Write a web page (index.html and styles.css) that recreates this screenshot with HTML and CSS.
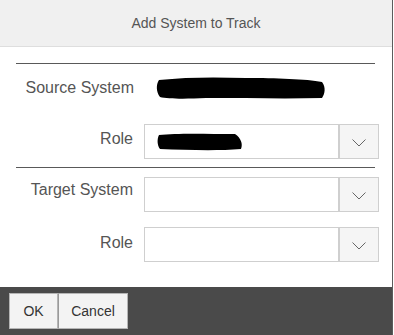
FILE: index.html
```html
<!DOCTYPE html>
<html lang="en">
<head>
  <meta charset="UTF-8">
  <title>Add System to Track</title>
  <link rel="stylesheet" href="styles.css">
</head>
<body>

  <div class="dialog">
    <div class="dialog-header">Add System to Track</div>

    <div class="dialog-body">
      <div class="separator first"></div>

      <div class="row source">
        <label class="row-label">Source System</label>
        <div class="row-value">
          <svg class="redact" width="170" height="24" viewBox="0 0 170 24">
            <path d="M3 4 C30 1 60 1 90 2 C120 2 150 3 166 6 C170 11 169 18 166 22 C130 23 90 22 50 22 C30 23 12 23 4 21 C0 16 0 8 3 4 Z" fill="#000"/>
          </svg>
        </div>
      </div>

      <div class="row role">
        <label class="row-label">Role</label>
        <div class="select">
          <div class="select-input">
            <svg class="redact small" width="86" height="18" viewBox="0 0 86 18">
              <path d="M2 2 C20 0 50 1 78 1 C84 5 86 11 84 16 C60 18 30 17 3 16 C0 12 0 6 2 2 Z" fill="#000"/>
            </svg>
          </div>
          <div class="select-btn">
            <svg width="14" height="8" viewBox="0 0 14 8"><polyline points="0.5,0.5 7,7 13.5,0.5" fill="none" stroke="#666" stroke-width="1"/></svg>
          </div>
        </div>
      </div>

      <div class="separator second"></div>

      <div class="row target">
        <label class="row-label">Target System</label>
        <div class="select">
          <div class="select-input"></div>
          <div class="select-btn">
            <svg width="14" height="8" viewBox="0 0 14 8"><polyline points="0.5,0.5 7,7 13.5,0.5" fill="none" stroke="#666" stroke-width="1"/></svg>
          </div>
        </div>
      </div>

      <div class="row role2">
        <label class="row-label">Role</label>
        <div class="select">
          <div class="select-input"></div>
          <div class="select-btn">
            <svg width="14" height="8" viewBox="0 0 14 8"><polyline points="0.5,0.5 7,7 13.5,0.5" fill="none" stroke="#666" stroke-width="1"/></svg>
          </div>
        </div>
      </div>
    </div>

    <div class="dialog-footer">
      <button class="btn ok">OK</button>
      <button class="btn cancel">Cancel</button>
    </div>
  </div>

</body>
</html>
```

FILE: styles.css
```css
body {
  margin: 0;
  font-family: 'Liberation Sans', Arial, sans-serif;
  background: #fff;
  overflow: hidden;
}

.dialog {
  width: 392px;
  height: 335px;
  border-right: 1px solid #5c5c5c;
  display: flex;
  flex-direction: column;
}

.dialog-header {
  height: 46px;
  line-height: 46px;
  background: #f0f0f0;
  border-bottom: 1px solid #dedede;
  text-align: center;
  font-size: 14px;
  color: #555;
}

.dialog-body {
  padding: 0 13px 0 16px;
  flex: 1;
}

.separator {
  height: 1px;
  background: #595959;
  margin-right: 4px;
}

.separator.first {
  margin-top: 16px;
}

.separator.second {
  margin-top: 8px;
}

.row {
  display: flex;
  align-items: flex-start;
  gap: 11px;
}

.row-label {
  width: 118px;
  text-align: right;
  font-size: 16px;
  line-height: 18px;
  color: #555;
  padding-top: 6px;
}

.row.source {
  height: 47px;
  align-items: center;
}

.row.source .row-label {
  padding-top: 0;
}

.row-value {
  display: flex;
  align-items: center;
  padding-left: 11px;
}

.row.role {
  margin-top: 13px;
}

.row.target {
  margin-top: 9px;
}

.row.target .row-label {
  padding-top: 4px;
}

.row.role2 {
  margin-top: 15px;
}

.row.role2 .row-label {
  padding-top: 7px;
}

.select {
  display: flex;
  height: 35px;
}

.select-input {
  width: 193px;
  border: 1px solid #cfcfcf;
  background: #fff;
  display: flex;
  align-items: center;
}

.select-input .redact {
  margin-left: 12px;
}

.select-btn {
  width: 40px;
  border: 1px solid #cfcfcf;
  background: #f5f5f5;
  display: flex;
  align-items: center;
  justify-content: center;
  padding-top: 3px;
  box-sizing: border-box;
}

.dialog-footer {
  height: 48px;
  background: #4a4a4a;
  display: flex;
  align-items: flex-start;
  padding: 6px 0 0 9px;
  box-sizing: border-box;
}

.btn {
  height: 36px;
  margin: 0;
  background: #f3f3f3;
  border: 1px solid #b5b5b5;
  font-family: 'Liberation Sans', Arial, sans-serif;
  font-size: 14px;
  color: #333;
  padding: 0;
}

.btn.ok {
  width: 49px;
}

.btn.cancel {
  width: 70px;
  border-left: 1px solid #9a9a9a;
}
```
